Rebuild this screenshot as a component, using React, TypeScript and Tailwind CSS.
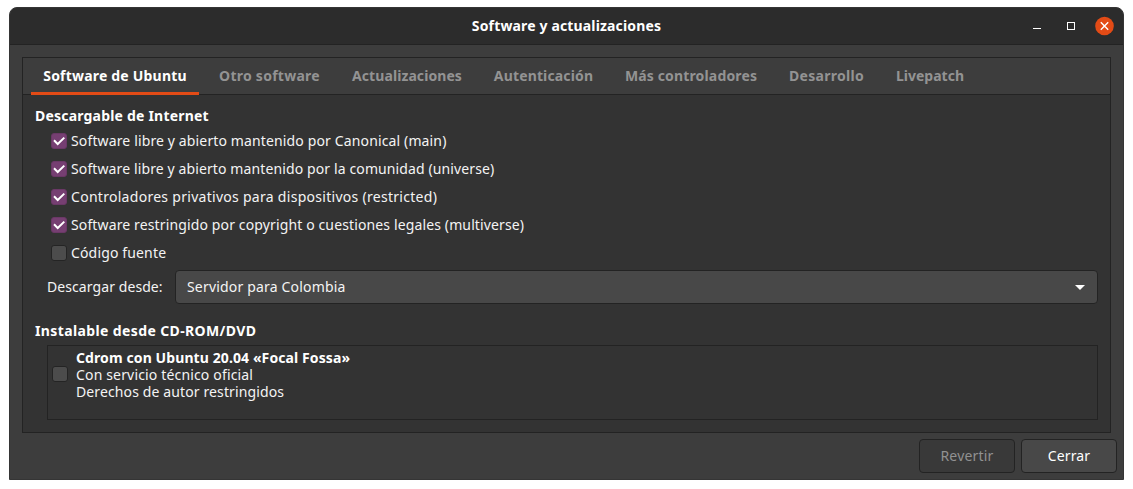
import React from "react";

const tabs = [
  { label: "Software de Ubuntu", box: "w-[168px]", text: "tracking-[0.2px]" },
  { label: "Otro software", box: "w-[125px]", text: "tracking-[0.26px]" },
  { label: "Actualizaciones", box: "w-[134px]", text: "tracking-[0.08px]" },
  { label: "Autenticación", box: "w-[123px]", text: "tracking-[0.14px]" },
  { label: "Más controladores", box: "w-[156px]", text: "tracking-[0.15px]" },
  { label: "Desarrollo", box: "w-[99px]", text: "tracking-[0.28px]" },
  { label: "Livepatch", box: "w-[92px]", text: "tracking-[0px]" },
];

const sources = [
  { label: "Software libre y abierto mantenido por Canonical (main)", on: true, text: "tracking-[0.135px]" },
  { label: "Software libre y abierto mantenido por la comunidad (universe)", on: true, text: "tracking-[0.115px]" },
  { label: "Controladores privativos para dispositivos (restricted)", on: true, text: "tracking-[0.285px]" },
  { label: "Software restringido por copyright o cuestiones legales (multiverse)", on: true, text: "tracking-[0.13px]" },
  { label: "Código fuente", on: false, text: "tracking-[0.15px]" },
];

function Check({ on }: { on: boolean }) {
  return on ? (
    <span className="block size-4 shrink-0 rounded-[3px] border border-[#6a3866] bg-[#763f72]">
      <svg viewBox="0 0 14 14" className="block size-[14px]" fill="none" stroke="#fff" strokeWidth="2">
        <path d="M2 6.3 L5.7 10 L12.3 3.6" />
      </svg>
    </span>
  ) : (
    <span className="block size-4 shrink-0 rounded-[3px] border border-[#242424] bg-[#4c4c4c]" />
  );
}

export default function App() {
  return (
    <div className="h-[489px] w-[1133px] bg-white pt-[7px] pl-[9px] font-['Noto_Sans',sans-serif] text-[14px] leading-[17px] whitespace-nowrap text-[#f4f4f4]">
      <div className="flex h-[473px] w-[1115px] flex-col overflow-hidden rounded-t-[8px] border border-[#353535] bg-[#3d3d3d]">
        <header className="grid h-[37px] shrink-0 grid-cols-[1fr_auto_1fr] items-center border-b border-[#232323] bg-[#2c2c2c]">
          <span />
          <h1 className="pb-px font-bold tracking-[0.15px] text-white">Software y actualizaciones</h1>
          <div className="flex items-center justify-end pr-[9px]">
            <svg width="81" height="20" viewBox="0 0 81 20" fill="none">
              <path d="M0 12.5H8" stroke="#fff" />
              <rect x="34.5" y="6.5" width="7" height="7" stroke="#fff" />
              <circle cx="71.5" cy="10" r="9.3" fill="#e34b16" />
              <path d="M67.8 6.3l7.4 7.4M75.2 6.3l-7.4 7.4" stroke="#fff" strokeWidth="1.4" />
            </svg>
          </div>
        </header>

        <main className="mt-3 ml-3 flex h-[376px] w-[1089px] shrink-0 flex-col border border-[#232323] bg-[#333]">
          <nav className="flex h-[37px] shrink-0 gap-2 border-b border-[#232323] bg-[#3d3d3d] pl-2">
            {tabs.map((tab, i) => (
              <button
                key={tab.label}
                className={`flex h-[37px] items-center justify-center border-b-[3px] pt-px font-bold ${tab.box} ${tab.text} ${
                  i === 0 ? "border-[#e34b16] text-white" : "border-transparent text-[#939393]"
                }`}
              >
                {tab.label}
              </button>
            ))}
          </nav>

          <section className="flex flex-col pt-3 pl-3">
            <h2 className="font-bold tracking-[0.2px] text-white">Descargable de Internet</h2>
            <ul className="mt-[3px] pl-4">
              {sources.map((s) => (
                <li key={s.label} className="flex h-7 items-center gap-1">
                  <Check on={s.on} />
                  <span className={`pb-[2px] ${s.text}`}>{s.label}</span>
                </li>
              ))}
            </ul>
            <div className="mt-[3px] flex items-center pl-3">
              <span className="w-[128px] pb-[2px] tracking-[0.08px]">Descargar desde:</span>
              <button className="flex h-[34px] w-[923px] items-center justify-between rounded-[4px] border border-[#232323] bg-[#484848] pr-3 pl-[11px]">
                <span className="pb-[2px] tracking-[0.18px]">Servidor para Colombia</span>
                <svg width="10" height="5" viewBox="0 0 10 5">
                  <path d="M0 0h10L5 5z" fill="#fff" />
                </svg>
              </button>
            </div>
          </section>

          <section className="flex flex-col pt-[18px] pl-3">
            <h2 className="font-bold tracking-[0.38px] text-white">Instalable desde CD-ROM/DVD</h2>
            <div className="mt-[6px] ml-3 flex h-[75px] w-[1051px] gap-2 border border-[#232323] pt-[3px] pl-1">
              <div className="pt-[17px]">
                <Check on={false} />
              </div>
              <div className="flex flex-col">
                <strong className="font-bold tracking-[0.1px] text-white">Cdrom con Ubuntu 20.04 «Focal Fossa»</strong>
                <span className="tracking-[0.16px]">Con servicio técnico oficial</span>
                <span className="tracking-[0.12px]">Derechos de autor restringidos</span>
              </div>
            </div>
          </section>
        </main>

        <footer className="mt-[6px] flex justify-end gap-[6px] pr-[6px]">
          <button className="h-[34px] w-24 rounded-[4px] border border-[#232323] bg-[#393939] pb-[2px] tracking-[0.2px] text-[#919191]">Revertir</button>
          <button className="h-[34px] w-24 rounded-[4px] border border-[#232323] bg-[#484848] pb-[2px] tracking-[0.1px] text-white">Cerrar</button>
        </footer>
      </div>
    </div>
  );
}
